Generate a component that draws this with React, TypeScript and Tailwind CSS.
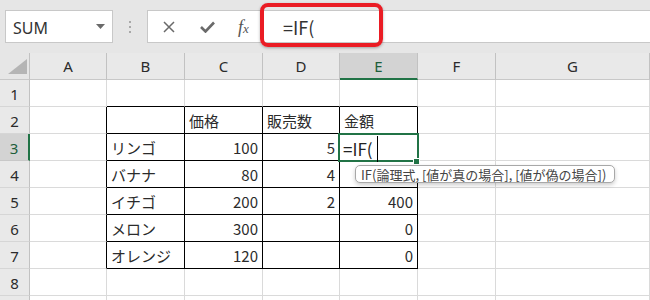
import React from "react";

const COLS = ["", "A", "B", "C", "D", "E", "F", "G"];

type Cell = { t: string; align?: "l" | "r" };

const DATA: Record<number, Record<number, Cell>> = {
  2: { 3: { t: "価格" }, 4: { t: "販売数" }, 5: { t: "金額" } },
  3: { 2: { t: "リンゴ" }, 3: { t: "100", align: "r" }, 4: { t: "5", align: "r" } },
  4: { 2: { t: "バナナ" }, 3: { t: "80", align: "r" }, 4: { t: "4", align: "r" } },
  5: { 2: { t: "イチゴ" }, 3: { t: "200", align: "r" }, 4: { t: "2", align: "r" }, 5: { t: "400", align: "r" } },
  6: { 2: { t: "メロン" }, 3: { t: "300", align: "r" }, 5: { t: "0", align: "r" } },
  7: { 2: { t: "オレンジ" }, 3: { t: "120", align: "r" }, 5: { t: "0", align: "r" } },
};

function GridCell({ r, c }: { r: number; c: number }) {
  const rightBlack = r >= 2 && r <= 7 && c >= 1 && c <= 5;
  const bottomBlack = r >= 1 && r <= 7 && c >= 2 && c <= 5;
  const cell = DATA[r]?.[c];
  return (
    <div
      className={
        "h-[27px] border-r border-b flex items-center pt-[3px] px-[4px] text-[15px] text-[#2b2b2b] whitespace-nowrap overflow-hidden " +
        (rightBlack ? "border-r-black " : "border-r-[#dadada] ") +
        (bottomBlack ? "border-b-black " : "border-b-[#dadada] ") +
        (cell?.align === "r" ? "justify-end" : "justify-start")
      }
    >
      {cell ? cell.t : ""}
    </div>
  );
}

export default function App() {
  const rows = [1, 2, 3, 4, 5, 6, 7, 8, 9];
  return (
    <div className="relative w-[650px] h-[300px] overflow-hidden bg-white font-['Noto_Sans_CJK_JP',sans-serif]">
      {/* Formula bar */}
      <div className="h-[53px] bg-[#e6e6e6] flex items-start pt-[10px] pl-[5px]">
        <div className="w-[108px] h-[33px] bg-white border border-[#c8c8c8] flex items-center justify-between pl-[7px] pr-[7px]">
          <span className="font-['Noto_Sans',sans-serif] text-[16px] text-[#333] pt-[2px]">SUM</span>
          <svg width="9" height="5" viewBox="0 0 9 5">
            <polygon points="0,0 9,0 4.5,5" fill="#6a6a6a" />
          </svg>
        </div>
        <div className="w-[34px] h-[33px] flex flex-col items-center justify-center gap-[3px]">
          <span className="w-[2px] h-[2px] bg-[#a8a8a8]" />
          <span className="w-[2px] h-[2px] bg-[#a8a8a8]" />
          <span className="w-[2px] h-[2px] bg-[#a8a8a8]" />
        </div>
        <div className="w-[115px] h-[33px] bg-white border border-[#c8c8c8] flex items-center">
          <div className="w-[40px] flex justify-center pl-[2px]">
            <svg width="12" height="12" viewBox="0 0 12 12">
              <path d="M1 1 L11 11 M11 1 L1 11" stroke="#6a6a6a" strokeWidth="1.5" />
            </svg>
          </div>
          <div className="w-[38px] flex justify-center">
            <svg width="15" height="12" viewBox="0 0 15 12">
              <path d="M1 6 L5.5 10.5 L14 1.5" stroke="#6a6a6a" strokeWidth="2.6" fill="none" />
            </svg>
          </div>
          <div className="w-[35px] flex justify-center">
            <span className="font-['Liberation_Serif',serif] italic text-[18px] text-[#555] leading-none">
              f<span className="text-[13px]">x</span>
            </span>
          </div>
        </div>
        <div className="flex-1 h-[33px] bg-white border-y border-l border-[#c8c8c8] ml-[1px] flex items-center pl-[19px]">
          <span className="text-[18px] text-[#333] leading-none">=IF(</span>
        </div>
      </div>

      {/* Red highlight */}
      <div className="absolute left-[260px] top-[3px] w-[123px] h-[44px] border-4 border-[#ea1c24] rounded-[8px] shadow-[0_1px_3px_rgba(0,0,0,0.3)]" />

      {/* Grid */}
      <div className="grid grid-cols-[30px_77px_78px_78px_77px_78px_78px_1fr]">
        {COLS.map((c, i) =>
          i === 0 ? (
            <div key={i} className="h-[27px] bg-[#e6e6e6] border-r border-b border-r-[#c2c2c2] border-b-[#c8c8c8] relative">
              <svg className="absolute left-[8px] top-[6px]" width="19" height="15" viewBox="0 0 19 15">
                <polygon points="0,15 19,15 19,0" fill="#b5b5b5" />
              </svg>
            </div>
          ) : i === 5 ? (
            <div key={i} className="h-[27px] bg-[#d3d3d3] border-r border-r-[#c2c2c2] border-b-2 border-b-[#217346] flex items-center justify-center font-['Noto_Sans',sans-serif] text-[15px] text-[#1d5e3a] pt-[1px]">
              {c}
            </div>
          ) : (
            <div key={i} className="h-[27px] bg-[#e9e9e9] border-r border-b border-r-[#c2c2c2] border-b-[#c8c8c8] flex items-center justify-center font-['Noto_Sans',sans-serif] text-[15px] text-[#2b2b2b] pt-[1px]">
              {c}
            </div>
          )
        )}
        {rows.map((r) => (
          <React.Fragment key={r}>
            {r === 3 ? (
              <div className="h-[27px] bg-[#d3d3d3] border-r-2 border-r-[#217346] border-b border-b-[#c8c8c8] flex items-center justify-center font-['Noto_Sans',sans-serif] text-[15px] text-[#1d5e3a] pt-[2px]">
                {r}
              </div>
            ) : (
              <div className="h-[27px] bg-[#e9e9e9] border-r border-b border-r-[#c2c2c2] border-b-[#d6d6d6] flex items-center justify-center font-['Noto_Sans',sans-serif] text-[15px] text-[#2b2b2b] pt-[2px]">
                {r === 9 ? "" : r}
              </div>
            )}
            {[1, 2, 3, 4, 5, 6, 7].map((c) => (
              <GridCell key={c} r={r} c={c} />
            ))}
          </React.Fragment>
        ))}
      </div>

      {/* Active cell E3 */}
      <div className="absolute left-[338px] top-[133px] w-[81px] h-[29px] border-2 border-[#217346] bg-white flex items-center pl-[3px] pt-[2px]">
        <span className="text-[17px] text-[#222] leading-none">=IF(</span>
        <span className="ml-[4px] w-[1px] h-[26px] bg-black" />
      </div>
      <div className="absolute left-[413px] top-[158px] w-[7px] h-[7px] bg-[#217346] border border-white" />

      {/* Tooltip */}
      <div className="absolute left-[355px] top-[165px] w-[260px] h-[18px] rounded-[5px] border border-[#a8a8a8] bg-white shadow-[0_2px_4px_rgba(0,0,0,0.2)] flex items-center pl-[5px] text-[13px] text-[#444] leading-none whitespace-nowrap">
        IF(論理式, [値が真の場合], [値が偽の場合])
      </div>
    </div>
  );
}
